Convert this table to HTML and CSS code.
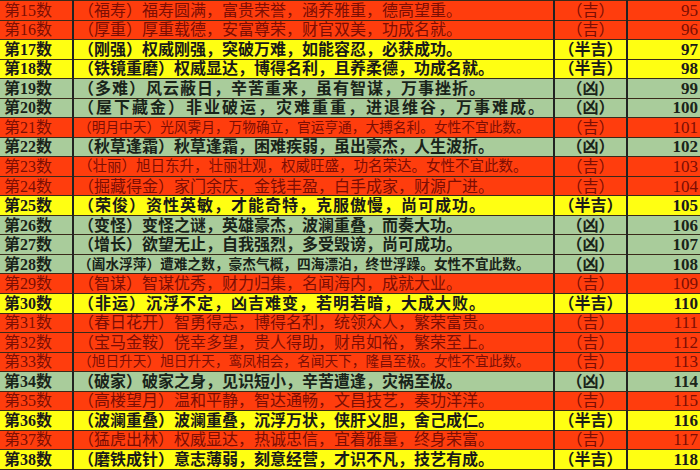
FILE: index.html
```html
<!DOCTYPE html>
<html lang="zh">
<head>
<meta charset="utf-8">
<link rel="stylesheet" href="styles.css">
</head>
<body>
<table class="sheet">
<colgroup><col class="c1"><col class="c2"><col class="c3"><col class="c4"></colgroup>
<tbody>
<tr class="r"><td class="n">第15数</td><td class="t">（福寿）福寿圆满，富贵荣誉，涵养雅重，德高望重。</td><td class="k">（吉）</td><td class="v">95</td></tr>
<tr class="r"><td class="n">第16数</td><td class="t">（厚重）厚重载德，安富尊荣，财官双美，功成名就。</td><td class="k">（吉）</td><td class="v">96</td></tr>
<tr class="y"><td class="n">第17数</td><td class="t">（刚强）权威刚强，突破万难，如能容忍，必获成功。</td><td class="k">（半吉）</td><td class="v">97</td></tr>
<tr class="y"><td class="n">第18数</td><td class="t">（铁镜重磨）权威显达，博得名利，且养柔德，功成名就。</td><td class="k">（半吉）</td><td class="v">98</td></tr>
<tr class="g"><td class="n">第19数</td><td class="t wide">（多难）风云蔽日，辛苦重来，虽有智谋，万事挫折。</td><td class="k">（凶）</td><td class="v">99</td></tr>
<tr class="g"><td class="n">第20数</td><td class="t xwide">（屋下藏金）非业破运，灾难重重，进退维谷，万事难成。</td><td class="k">（凶）</td><td class="v">100</td></tr>
<tr class="r"><td class="n">第21数</td><td class="t sm">（明月中天）光风霁月，万物确立，官运亨通，大搏名利。女性不宜此数。</td><td class="k">（吉）</td><td class="v">101</td></tr>
<tr class="g"><td class="n">第22数</td><td class="t">（秋草逢霜）秋草逢霜，困难疾弱，虽出豪杰，人生波折。</td><td class="k">（凶）</td><td class="v">102</td></tr>
<tr class="r"><td class="n">第23数</td><td class="t md">（壮丽）旭日东升，壮丽壮观，权威旺盛，功名荣达。女性不宜此数。</td><td class="k">（吉）</td><td class="v">103</td></tr>
<tr class="r"><td class="n">第24数</td><td class="t">（掘藏得金）家门余庆，金钱丰盈，白手成家，财源广进。</td><td class="k">（吉）</td><td class="v">104</td></tr>
<tr class="y"><td class="n">第25数</td><td class="t wide">（荣俊）资性英敏，才能奇特，克服傲慢，尚可成功。</td><td class="k">（半吉）</td><td class="v">105</td></tr>
<tr class="g"><td class="n">第26数</td><td class="t">（变怪）变怪之谜，英雄豪杰，波澜重叠，而奏大功。</td><td class="k">（凶）</td><td class="v">106</td></tr>
<tr class="g"><td class="n">第27数</td><td class="t">（增长）欲望无止，自我强烈，多受毁谤，尚可成功。</td><td class="k">（凶）</td><td class="v">107</td></tr>
<tr class="g"><td class="n">第28数</td><td class="t sm">（阖水浮萍）遭难之数，豪杰气概，四海漂泊，终世浮躁。女性不宜此数。</td><td class="k">（凶）</td><td class="v">108</td></tr>
<tr class="r"><td class="n">第29数</td><td class="t">（智谋）智谋优秀，财力归集，名闻海内，成就大业。</td><td class="k">（吉）</td><td class="v">109</td></tr>
<tr class="y"><td class="n">第30数</td><td class="t wide">（非运）沉浮不定，凶吉难变，若明若暗，大成大败。</td><td class="k">（半吉）</td><td class="v">110</td></tr>
<tr class="r"><td class="n">第31数</td><td class="t">（春日花开）智勇得志，博得名利，统领众人，繁荣富贵。</td><td class="k">（吉）</td><td class="v">111</td></tr>
<tr class="r"><td class="n">第32数</td><td class="t">（宝马金鞍）侥幸多望，贵人得助，财帛如裕，繁荣至上。</td><td class="k">（吉）</td><td class="v">112</td></tr>
<tr class="r"><td class="n">第33数</td><td class="t sm">（旭日升天）旭日升天，鸾凤相会，名闻天下，隆昌至极。女性不宜此数。</td><td class="k">（吉）</td><td class="v">113</td></tr>
<tr class="g"><td class="n">第34数</td><td class="t">（破家）破家之身，见识短小，辛苦遭逢，灾祸至极。</td><td class="k">（凶）</td><td class="v">114</td></tr>
<tr class="r"><td class="n">第35数</td><td class="t">（高楼望月）温和平静，智达通畅，文昌技艺，奏功洋洋。</td><td class="k">（吉）</td><td class="v">115</td></tr>
<tr class="y"><td class="n">第36数</td><td class="t">（波澜重叠）波澜重叠，沉浮万状，侠肝义胆，舍己成仁。</td><td class="k">（半吉）</td><td class="v">116</td></tr>
<tr class="r"><td class="n">第37数</td><td class="t">（猛虎出林）权威显达，热诚忠信，宜着雅量，终身荣富。</td><td class="k">（吉）</td><td class="v">117</td></tr>
<tr class="y"><td class="n">第38数</td><td class="t">（磨铁成针）意志薄弱，刻意经营，才识不凡，技艺有成。</td><td class="k">（半吉）</td><td class="v">118</td></tr>
</tbody>
</table>
</body>
</html>
```
FILE: styles.css
```css
html, body {
  margin: 0;
  padding: 0;
  background: #ff3d0d;
  overflow: hidden;
}
.sheet {
  width: 700px;
  height: 470px;
  border-collapse: collapse;
  table-layout: fixed;
  font-family: "Liberation Serif", "Noto Sans CJK SC", serif;
  font-size: 16px;
  font-weight: 700;
  color: #111;
}
.c1 { width: 73px; }
.c2 { width: 481px; }
.c3 { width: 73px; }
.c4 { width: 73px; }
.sheet td {
  border-top: 1px solid #3a2a1a;
  border-bottom: 1px solid #3a2a1a;
  border-left: 2px solid #222;
  border-right: 2px solid #222;
  padding: 0;
  white-space: nowrap;
  overflow: hidden;
  line-height: 17px;
  vertical-align: middle;
}
.sheet td:first-child { border-left: 0; }
.sheet td:last-child { border-right: 0; }
.n { padding-left: 4px !important; }
.t { padding-left: 4px !important; }
.k { text-align: center; }
.v { text-align: right; padding-right: 2px !important; font-size: 17px; }
.r { background: #ff3d0d; color: #7c0e04; }
.r td { font-weight: 400; }
.y { background: #ffff12; color: #1a1a1a; }
.g { background: #a9cc9b; color: #1a241a; }
.wide { letter-spacing: 1px; }
.xwide { letter-spacing: 2px; }
.sm { font-size: 13.7px; }
.md { font-size: 14.5px; }
```
